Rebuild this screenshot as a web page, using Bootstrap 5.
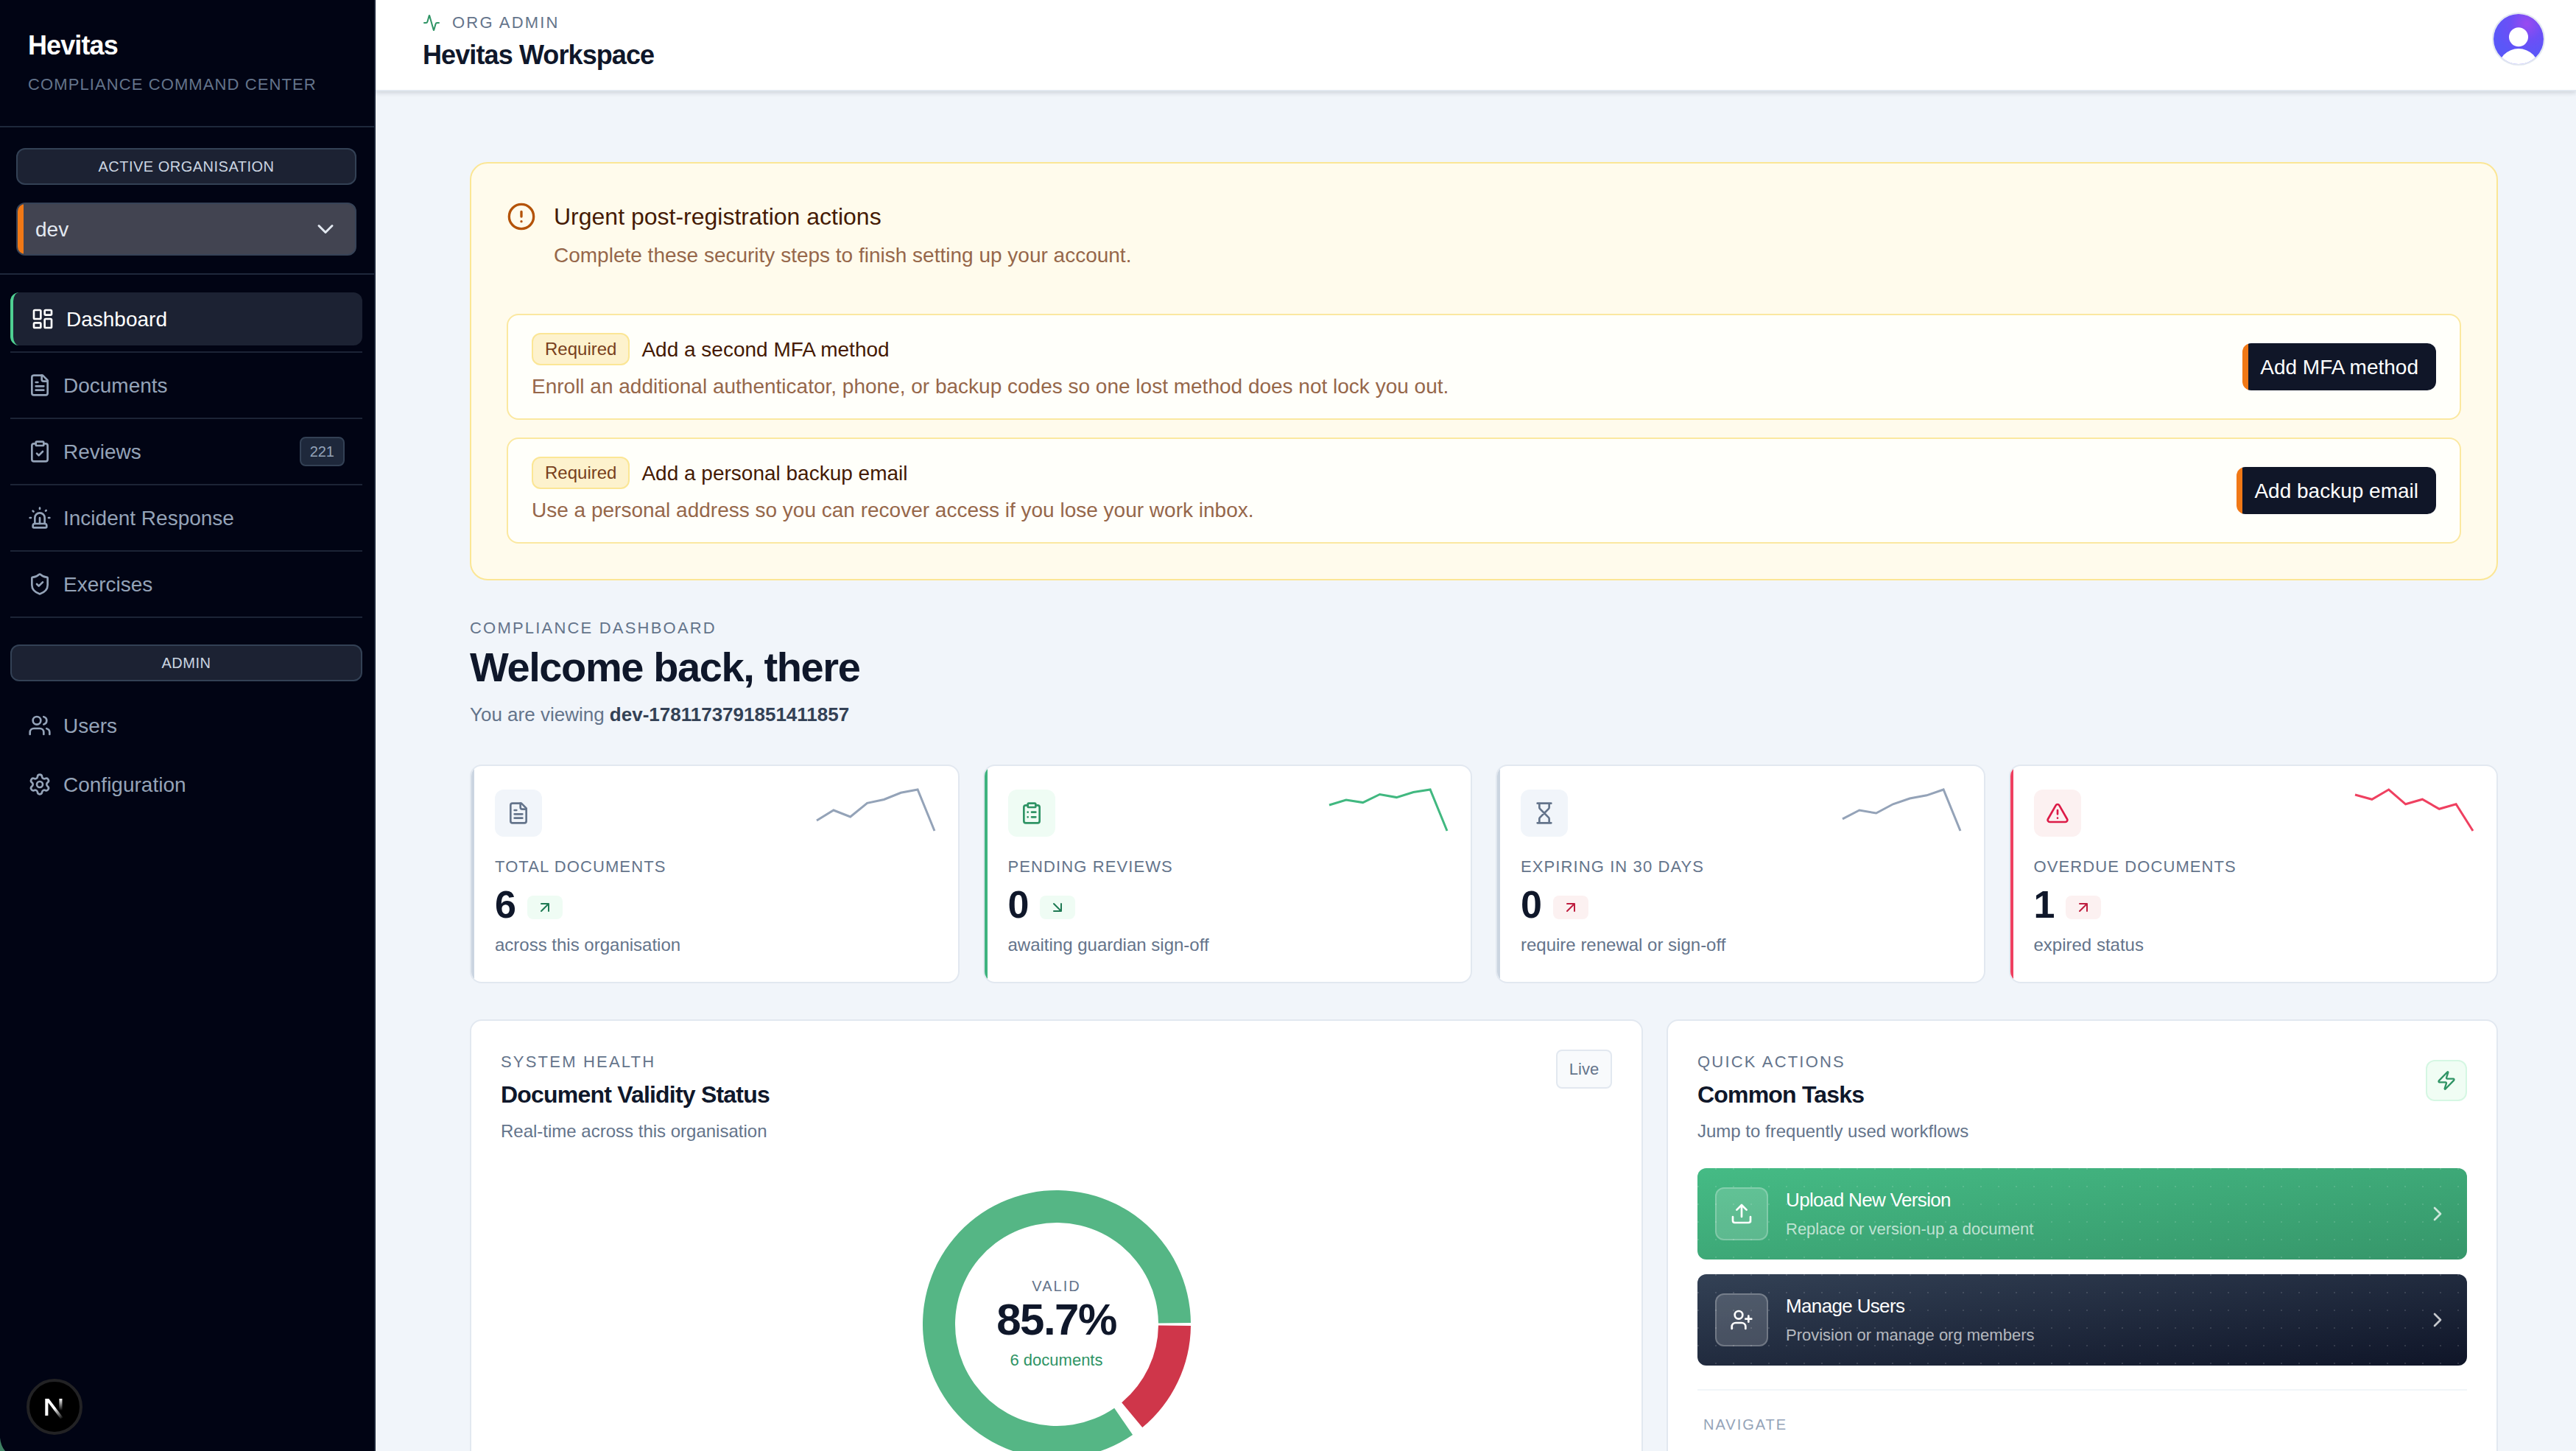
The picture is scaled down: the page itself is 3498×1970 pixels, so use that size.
<!DOCTYPE html>
<html lang="en">
<head>
<meta charset="utf-8">
<title>Hevitas Workspace</title>
<link href="https://cdn.jsdelivr.net/npm/bootstrap@5.3.0/dist/css/bootstrap.min.css" rel="stylesheet">
<style>
body{font-family:"Liberation Sans",Arial,sans-serif;background:#f1f5fa;color:#0f172a;font-size:28px;line-height:40px;height:1970px;overflow:hidden}
.ic{fill:none;stroke:currentColor;stroke-width:2;stroke-linecap:round;stroke-linejoin:round;flex-shrink:0;display:block;width:32px;height:32px}
.ic24{width:24px;height:24px}.ic28{width:28px;height:28px}.ic36{width:36px;height:36px}.ic40{width:40px;height:40px}
.shell{height:1970px;overflow:hidden}
.side{width:510px;flex-shrink:0;background:#010414;border-right:2px solid #1c2436;position:relative}
.side-head{height:173px;border-bottom:2px solid #1e283b;padding:42px 38px 0}
.brand{font-size:36px;line-height:40px;font-weight:700;letter-spacing:-.025em;color:#fff}
.tagline{font-size:22px;line-height:32px;letter-spacing:.05em;color:#64748b;margin-top:17px}
.side-org{height:200px;border-bottom:2px solid #1e283b;padding:28px 24px 0 22px}
.pill{height:50px;border:2px solid #334155;border-radius:12px;background:#1c2233;color:#cbd5e1;font-size:20px;line-height:30px;letter-spacing:.025em;padding-bottom:1px}
.org-select{height:72px;margin-top:24px;border:2px solid #374357;border-radius:12px;background:linear-gradient(90deg,#f07816 8px,#424451 8px);color:#e2e8f0;padding:0 22px 0 24px}
.side-nav{padding:24px 16px 0 14px}
.nav-item-row{padding-bottom:8px;border-bottom:2px solid #1c2436;margin-bottom:8px}
.nav-lnk{height:72px;padding:0 24px;border-radius:12px;color:#94a3b8;gap:16px}
.nav-lnk>span:not(.cnt),.org-select>span,.btn-dark-o>span{padding-top:2px}
.nav-lnk.is-active{background:#1c2233;border-left:4px solid #4fd092;color:#fff}
.pill-admin{margin:36px 0 24px}
.cnt{height:40px;padding:0 12px;border:2px solid #334155;border-radius:8px;background:#1e283b;color:#94a3b8;font-size:20px;line-height:36px}
.dev-badge{position:absolute;left:36px;top:1872px;width:76px;height:76px}
.win-corner{position:absolute;left:0;bottom:0;width:8px;height:18px}
.top{height:124px;background:#fff;border-bottom:2px solid #e2e8f0;box-shadow:0 2px 6px rgba(15,23,42,.16);padding:14px 42px 0 64px;position:relative}
.eyebrow{font-size:22px;line-height:32px;letter-spacing:.1em;color:#64748b}
.eyebrow>span{padding-top:1px}
.top-title{font-size:36px;line-height:40px;font-weight:700;letter-spacing:-.025em;margin-top:8px}
.avatar{margin-top:3px}
.content{padding:96px 106px 0 128px}
.notice{height:568px;border:2px solid #fbe695;border-radius:24px;background:#fffbec;padding:48px}
.notice-head{gap:24px;height:156px}
.notice-head .ic{color:#b45309;margin-top:4px}
.notice-title{font-size:32px;line-height:48px;color:#451a03}
.soft{color:#96674a;padding-top:9px;margin-bottom:-1px}
.task{height:144px;border:2px solid #fbe8a0;border-radius:16px;background:#fffffa;padding:24px 32px}
.task-title{color:#451a03}
.task-title>span:last-child{padding-top:1px}
.req{height:44px;padding:0 16px;border:2px solid #fbe695;border-radius:12px;background:#fdf2cd;color:#78401c;font-size:24px;line-height:40px}
.btn-dark-o{height:64px;padding:0 24px;border-radius:12px;background:linear-gradient(90deg,#f07816 8px,#101628 8px);color:#fff}
.hello{font-size:56px;line-height:64px;font-weight:700;letter-spacing:-.025em;margin-top:5px}
.viewing{font-size:26px;line-height:40px;color:#64748b;margin-top:12px}
.viewing b{color:#334155}
.stats{gap:32px;margin-top:48px}
.panel{background:#fff;border:2px solid #e2e8f0;border-radius:16px;overflow:hidden;position:relative}
.stat{flex:1 1 0;height:297px;padding:32px}
.stat::before{content:"";position:absolute;left:0;top:0;bottom:0;width:4px;background:#cbd5e1}
.stat-ok::before{background:#3fb37f}.stat-bad::before{background:#ef4060}
.tile{width:64px;height:64px;border-radius:12px;background:#f1f5fa;color:#64748b}
.tile-ok{background:#effcf4;color:#2f9465}.tile-bad{background:#fcf1f1;color:#dc1c48}
.spark{width:160px;height:56px;overflow:visible;fill:none;stroke-width:3}
.stat-label{font-size:22px;line-height:32px;letter-spacing:.05em;color:#64748b;margin-top:25px}
.stat-row{margin-top:7px}
.stat-num{font-size:52px;line-height:56px;font-weight:700;letter-spacing:-.025em}
.trend{height:32px;padding:0 12px;border-radius:8px;margin:16px 0 0 16px}
.stat-note{margin-top:11px}
.sub{font-size:24px;line-height:32px;color:#64748b}
.up-ok{background:#effcf4;color:#1f7a54}.up-bad{background:#fcf1f1;color:#be1e40}
.lower{gap:32px;margin-top:49px}
.health{width:1593px;height:700px;padding:40px}
.quick{flex:1;height:700px;padding:40px}
.panel-title{font-size:32px;line-height:40px;font-weight:700;letter-spacing:-.025em;margin-top:8px}
.panel-sub{margin-top:14px}
.live{height:53px;width:76px;border:2px solid #e2e8f0;border-radius:8px;background:#f8fafc;color:#64748b;font-size:22px;margin-top:-1px}
.quick-head{height:160px}
.bolt{width:56px;height:56px;border:2px solid #d5f7e3;border-radius:12px;background:#f0fdf4;color:#2f9465;margin-top:13px}
.donut{width:364px;height:364px;margin:64px auto 0;position:relative}
.donut-text{position:absolute;inset:0;text-align:center;padding-top:114px}
.d-label{font-size:20px;line-height:32px;letter-spacing:.1em;color:#64748b}
.d-num{font-size:60px;line-height:60px;font-weight:700;letter-spacing:-.025em}
.d-note{font-size:22px;line-height:32px;color:#2f9465;margin-top:9px}
.act{height:124px;border-radius:12px;padding:0 24px;color:#fff}
.act-g{background:radial-gradient(circle at 1px 1px,rgba(255,255,255,.13) 1px,transparent 1.5px) 0 0/24px 24px,linear-gradient(to bottom right,#45bb85,#36966a)}
.act-d{background:radial-gradient(circle at 1px 1px,rgba(255,255,255,.13) 1px,transparent 1.5px) 0 0/24px 24px,linear-gradient(to bottom right,#334155,#0f1528);margin-top:20px}
.act-tile{width:72px;height:72px;border-radius:12px;border:2px solid rgba(255,255,255,.22);background:rgba(255,255,255,.16);margin-right:24px}
.act-t{font-size:26px;line-height:40px;letter-spacing:-.025em;padding-top:2px}
.act-s{font-size:22px;line-height:40px;color:rgba(255,255,255,.68)}
.chev{opacity:.75}
.navg{border-top:2px solid #f1f5f9;margin-top:32px;padding:30px 8px 0;font-size:20px;line-height:32px;letter-spacing:.1em;color:#94a3b8}
</style>
<script src="https://cdn.jsdelivr.net/npm/bootstrap@5.3.0/dist/js/bootstrap.bundle.min.js"></script>
</head>
<body>
<div class="shell d-flex">
<aside class="side">
  <div class="side-head"><div class="brand">Hevitas</div><div class="tagline">COMPLIANCE COMMAND CENTER</div></div>
  <div class="side-org">
    <div class="pill d-flex align-items-center justify-content-center">ACTIVE ORGANISATION</div>
    <div class="org-select d-flex align-items-center justify-content-between"><span>dev</span><svg class="ic ic36" viewBox="0 0 24 24"><path d="m6 9 6 6 6-6"/></svg></div>
  </div>
  <nav class="side-nav">
    <div class="nav-item-row"><div class="nav-lnk is-active d-flex align-items-center"><svg class="ic" viewBox="0 0 24 24"><rect width="7" height="9" x="3" y="3" rx="1"/><rect width="7" height="5" x="14" y="3" rx="1"/><rect width="7" height="9" x="14" y="12" rx="1"/><rect width="7" height="5" x="3" y="16" rx="1"/></svg><span>Dashboard</span></div></div>
    <div class="nav-item-row"><div class="nav-lnk d-flex align-items-center"><svg class="ic" viewBox="0 0 24 24"><path d="M15 2H6a2 2 0 0 0-2 2v16a2 2 0 0 0 2 2h12a2 2 0 0 0 2-2V7Z"/><path d="M14 2v4a2 2 0 0 0 2 2h4M10 9H8M16 13H8M16 17H8"/></svg><span>Documents</span></div></div>
    <div class="nav-item-row"><div class="nav-lnk d-flex align-items-center"><svg class="ic" viewBox="0 0 24 24"><rect width="8" height="4" x="8" y="2" rx="1"/><path d="M16 4h2a2 2 0 0 1 2 2v14a2 2 0 0 1-2 2H6a2 2 0 0 1-2-2V6a2 2 0 0 1 2-2h2"/><path d="m9 14 2 2 4-4"/></svg><span class="flex-grow-1">Reviews</span><span class="cnt">221</span></div></div>
    <div class="nav-item-row"><div class="nav-lnk d-flex align-items-center"><svg class="ic" viewBox="0 0 24 24"><path d="M7 18v-6a5 5 0 1 1 10 0v6"/><path d="M5 21a1 1 0 0 0 1 1h12a1 1 0 0 0 1-1v-1a2 2 0 0 0-2-2H7a2 2 0 0 0-2 2z"/><path d="M21 12h1M18.5 4.5 18 5M2 12h1M12 2v1M4.929 4.929l.707.707M12 12v6"/></svg><span>Incident Response</span></div></div>
    <div class="nav-item-row"><div class="nav-lnk d-flex align-items-center"><svg class="ic" viewBox="0 0 24 24"><path d="M20 13c0 5-3.5 7.5-7.66 8.95a1 1 0 0 1-.67-.01C7.5 20.5 4 18 4 13V6a1 1 0 0 1 1-1c2 0 4.5-1.2 6.24-2.72a1.17 1.17 0 0 1 1.52 0C14.51 3.81 17 5 19 5a1 1 0 0 1 1 1z"/><path d="m9 12 2 2 4-4"/></svg><span>Exercises</span></div></div>
    <div class="pill pill-admin d-flex align-items-center justify-content-center">ADMIN</div>
    <div class="nav-lnk d-flex align-items-center mb-2"><svg class="ic" viewBox="0 0 24 24"><path d="M16 21v-2a4 4 0 0 0-4-4H6a4 4 0 0 0-4 4v2"/><circle cx="9" cy="7" r="4"/><path d="M22 21v-2a4 4 0 0 0-3-3.87M16 3.13a4 4 0 0 1 0 7.75"/></svg><span>Users</span></div>
    <div class="nav-lnk d-flex align-items-center"><svg class="ic" viewBox="0 0 24 24"><path d="M9.671 4.136a2.34 2.34 0 0 1 4.659 0 2.34 2.34 0 0 0 3.319 1.915 2.34 2.34 0 0 1 2.33 4.033 2.34 2.34 0 0 0 0 3.831 2.34 2.34 0 0 1-2.33 4.033 2.34 2.34 0 0 0-3.319 1.915 2.34 2.34 0 0 1-4.659 0 2.34 2.34 0 0 0-3.32-1.915 2.34 2.34 0 0 1-2.33-4.033 2.34 2.34 0 0 0 0-3.831A2.34 2.34 0 0 1 6.35 6.051a2.34 2.34 0 0 0 3.319-1.915"/><circle cx="12" cy="12" r="3"/></svg><span>Configuration</span></div>
  </nav>
  <svg class="win-corner" viewBox="0 0 8 18"><path d="M0 0Q1 11 7 18H0Z" fill="#3f8163"/></svg>
  <svg class="dev-badge" viewBox="0 0 76 76"><defs><linearGradient id="n1" gradientUnits="userSpaceOnUse" x1="38" y1="40" x2="49" y2="54"><stop offset="0" stop-color="#fff"/><stop offset="1" stop-color="#fff" stop-opacity="0"/></linearGradient><linearGradient id="n2" gradientUnits="userSpaceOnUse" x1="46" y1="27" x2="46" y2="43"><stop offset="0" stop-color="#fff"/><stop offset="1" stop-color="#fff" stop-opacity="0"/></linearGradient></defs><circle cx="38" cy="38" r="36" fill="#000" stroke="#222224" stroke-width="4"/><path d="M25.3 27h5L49.6 52.4l-3.3 2L29.4 32.2V50h-4.1Z" fill="url(#n1)"/><path d="M44.4 27h4.1v16h-4.1Z" fill="url(#n2)"/></svg>
</aside>
<div class="flex-grow-1">
  <header class="top d-flex justify-content-between">
    <div><div class="d-flex align-items-center gap-3 eyebrow"><svg class="ic ic24" style="color:#2f9465" viewBox="0 0 24 24"><path d="M22 12h-2.48a2 2 0 0 0-1.93 1.46l-2.35 8.36a.25.25 0 0 1-.48 0L9.24 2.18a.25.25 0 0 0-.48 0l-2.35 8.36A2 2 0 0 1 4.49 12H2"/></svg><span>ORG ADMIN</span></div>
    <div class="top-title">Hevitas Workspace</div></div>
    <svg class="avatar" width="72" height="72" viewBox="0 0 72 72"><defs><radialGradient id="av" cx=".66" cy=".2" r=".65"><stop offset="0" stop-color="#9a4bf0"/><stop offset=".5" stop-color="#6c4ff6"/><stop offset="1" stop-color="#5a57f8"/></radialGradient><clipPath id="ac"><circle cx="36" cy="36" r="34"/></clipPath></defs><circle cx="36" cy="36" r="35" fill="#fff" stroke="#e2e8f0" stroke-width="2"/><g clip-path="url(#ac)"><circle cx="36" cy="36" r="34.5" fill="url(#av)"/><circle cx="36" cy="33.3" r="13" fill="#fff"/><circle cx="36" cy="77" r="28" fill="#fff"/></g></svg>
  </header>
  <main class="content">
    <section class="notice">
      <div class="notice-head d-flex"><svg class="ic ic40" viewBox="0 0 24 24"><circle cx="12" cy="12" r="10"/><path d="M12 8v4M12 16h.01"/></svg><div><div class="notice-title">Urgent post-registration actions</div><div class="soft">Complete these security steps to finish setting up your account.</div></div></div>
      <div class="task d-flex align-items-center justify-content-between"><div><div class="task-title d-flex align-items-center gap-3"><span class="req">Required</span><span>Add a second MFA method</span></div><div class="soft">Enroll an additional authenticator, phone, or backup codes so one lost method does not lock you out.</div></div><div class="btn-dark-o d-flex align-items-center"><span>Add MFA method</span></div></div>
      <div class="task d-flex align-items-center justify-content-between mt-4"><div><div class="task-title d-flex align-items-center gap-3"><span class="req">Required</span><span>Add a personal backup email</span></div><div class="soft">Use a personal address so you can recover access if you lose your work inbox.</div></div><div class="btn-dark-o d-flex align-items-center"><span>Add backup email</span></div></div>
    </section>
    <div class="eyebrow mt-5"><span class="d-block">COMPLIANCE DASHBOARD</span></div>
    <div class="hello">Welcome back, there</div>
    <div class="viewing">You are viewing <b>dev-1781173791851411857</b></div>
    <section class="stats d-flex">
      <div class="panel stat"><div class="d-flex justify-content-between"><div class="tile d-flex align-items-center justify-content-center"><svg class="ic" viewBox="0 0 24 24"><path d="M15 2H6a2 2 0 0 0-2 2v16a2 2 0 0 0 2 2h12a2 2 0 0 0 2-2V7Z"/><path d="M14 2v4a2 2 0 0 0 2 2h4M10 9H8M16 13H8M16 17H8"/></svg></div><svg class="spark" stroke="#94a3b8" viewBox="0 0 160 56"><polyline points="0,42 22.9,28 45.7,37 68.6,18.3 91.4,13.5 114.3,4.3 137.1,0 160,56"/></svg></div>
        <div class="stat-label">TOTAL DOCUMENTS</div><div class="stat-row d-flex"><div class="stat-num">6</div><div class="trend up-ok d-flex align-items-center"><svg class="ic ic24" viewBox="0 0 24 24"><path d="M7 7h10v10M7 17 17 7"/></svg></div></div><div class="sub stat-note">across this organisation</div></div>
      <div class="panel stat stat-ok"><div class="d-flex justify-content-between"><div class="tile tile-ok d-flex align-items-center justify-content-center"><svg class="ic" viewBox="0 0 24 24"><rect width="8" height="4" x="8" y="2" rx="1"/><path d="M16 4h2a2 2 0 0 1 2 2v14a2 2 0 0 1-2 2H6a2 2 0 0 1-2-2V6a2 2 0 0 1 2-2h2M12 11h4M12 16h4M8 11h.01M8 16h.01"/></svg></div><svg class="spark" stroke="#41b880" viewBox="0 0 160 56"><polyline points="0,21 22.9,14 45.7,17.6 68.6,6.5 91.4,10.6 114.3,3.5 137.1,0 160,56"/></svg></div>
        <div class="stat-label">PENDING REVIEWS</div><div class="stat-row d-flex"><div class="stat-num">0</div><div class="trend up-ok d-flex align-items-center"><svg class="ic ic24" viewBox="0 0 24 24"><path d="m7 7 10 10M17 7v10H7"/></svg></div></div><div class="sub stat-note">awaiting guardian sign-off</div></div>
      <div class="panel stat"><div class="d-flex justify-content-between"><div class="tile d-flex align-items-center justify-content-center"><svg class="ic" viewBox="0 0 24 24"><path d="M5 22h14M5 2h14M17 22v-4.172a2 2 0 0 0-.586-1.414L12 12l-4.414 4.414A2 2 0 0 0 7 17.828V22M7 2v4.172a2 2 0 0 0 .586 1.414L12 12l4.414-4.414A2 2 0 0 0 17 6.172V2"/></svg></div><svg class="spark" stroke="#94a3b8" viewBox="0 0 160 56"><polyline points="0,39.8 22.9,28 45.7,32 68.6,19.8 91.4,12 114.3,7.8 137.1,0 160,56"/></svg></div>
        <div class="stat-label">EXPIRING IN 30 DAYS</div><div class="stat-row d-flex"><div class="stat-num">0</div><div class="trend up-bad d-flex align-items-center"><svg class="ic ic24" viewBox="0 0 24 24"><path d="M7 7h10v10M7 17 17 7"/></svg></div></div><div class="sub stat-note">require renewal or sign-off</div></div>
      <div class="panel stat stat-bad"><div class="d-flex justify-content-between"><div class="tile tile-bad d-flex align-items-center justify-content-center"><svg class="ic" viewBox="0 0 24 24"><path d="m21.73 18-8-14a2 2 0 0 0-3.48 0l-8 14A2 2 0 0 0 4 21h16a2 2 0 0 0 1.73-3M12 9v4M12 17h.01"/></svg></div><svg class="spark" stroke="#ef4060" viewBox="0 0 160 56"><polyline points="0,7 22.9,13.3 45.7,0 68.6,19.8 91.4,13.2 114.3,26.3 137.1,19.8 160,56"/></svg></div>
        <div class="stat-label">OVERDUE DOCUMENTS</div><div class="stat-row d-flex"><div class="stat-num">1</div><div class="trend up-bad d-flex align-items-center"><svg class="ic ic24" viewBox="0 0 24 24"><path d="M7 7h10v10M7 17 17 7"/></svg></div></div><div class="sub stat-note">expired status</div></div>
    </section>
    <section class="lower d-flex">
      <div class="panel health">
        <div class="d-flex justify-content-between"><div><div class="eyebrow">SYSTEM HEALTH</div><div class="panel-title">Document Validity Status</div><div class="sub panel-sub">Real-time across this organisation</div></div><div class="live d-flex align-items-center justify-content-center">Live</div></div>
        <div class="donut"><svg id="ring" width="364" height="364" viewBox="-182 -182 364 364"></svg>
          <div class="donut-text"><div class="d-label">VALID</div><div class="d-num">85.7%</div><div class="d-note">6 documents</div></div></div>
      </div>
      <div class="panel quick">
        <div class="quick-head d-flex justify-content-between"><div><div class="eyebrow">QUICK ACTIONS</div><div class="panel-title">Common Tasks</div><div class="sub panel-sub">Jump to frequently used workflows</div></div><div class="bolt d-flex align-items-center justify-content-center"><svg class="ic ic28" viewBox="0 0 24 24"><path d="M4 14a1 1 0 0 1-.78-1.63l9.9-10.2a.5.5 0 0 1 .86.46l-1.92 6.02A1 1 0 0 0 13 10h7a1 1 0 0 1 .78 1.63l-9.9 10.2a.5.5 0 0 1-.86-.46l1.92-6.02A1 1 0 0 0 11 14z"/></svg></div></div>
        <div class="act act-g d-flex align-items-center"><div class="act-tile d-flex align-items-center justify-content-center"><svg class="ic" viewBox="0 0 24 24"><path d="M12 3v12M17 8l-5-5-5 5M21 15v4a2 2 0 0 1-2 2H5a2 2 0 0 1-2-2v-4"/></svg></div><div class="flex-grow-1"><div class="act-t">Upload New Version</div><div class="act-s">Replace or version-up a document</div></div><svg class="ic chev" viewBox="0 0 24 24"><path d="m9 18 6-6-6-6"/></svg></div>
        <div class="act act-d d-flex align-items-center"><div class="act-tile d-flex align-items-center justify-content-center"><svg class="ic" viewBox="0 0 24 24"><path d="M16 21v-2a4 4 0 0 0-4-4H6a4 4 0 0 0-4 4v2"/><circle cx="9" cy="7" r="4"/><path d="M19 8v6M22 11h-6"/></svg></div><div class="flex-grow-1"><div class="act-t">Manage Users</div><div class="act-s">Provision or manage org members</div></div><svg class="ic chev" viewBox="0 0 24 24"><path d="m9 18 6-6-6-6"/></svg></div>
        <div class="navg">NAVIGATE</div>
      </div>
    </section>
  </main>
</div>
</div>
<script>
const arc=(a,b,c)=>{const p=(r,d)=>{const t=d*Math.PI/180;return (r*Math.cos(t)).toFixed(2)+' '+(r*Math.sin(t)).toFixed(2)};const l=b-a>180?1:0;
return `<path fill="${c}" d="M${p(182,a)}A182 182 0 ${l} 1 ${p(182,b)}L${p(138,b)}A138 138 0 ${l} 0 ${p(138,a)}Z"/>`};
document.getElementById('ring').innerHTML=arc(.6,50.3,'#cf364a')+arc(55.5,359.4,'#55b685');
</script>
</body>
</html>
